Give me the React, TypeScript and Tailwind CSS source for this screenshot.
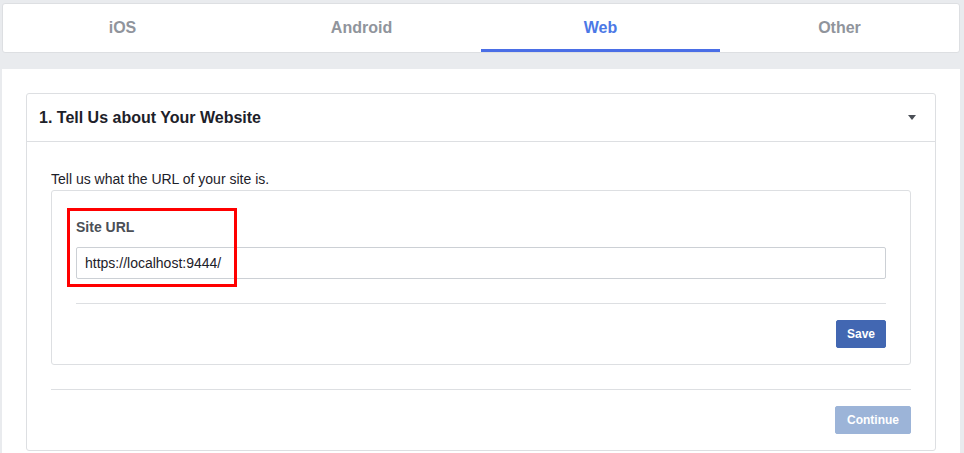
import { useState } from 'react';

const tabs = ['iOS', 'Android', 'Web', 'Other'];

export default function App() {
  const [active, setActive] = useState('Web');
  const [url, setUrl] = useState('https://localhost:9444/');

  return (
    <div className="min-h-screen bg-[#e9ebee] pt-[3px] pl-[2px] pr-[4px] font-['Liberation_Sans',Arial,sans-serif] text-[#1d2129]">
      {/* Platform tabs */}
      <div className="flex h-[50px] bg-white border border-[#dddfe2] rounded-[3px] overflow-hidden">
        {tabs.map((tab) => (
          <button
            key={tab}
            onClick={() => setActive(tab)}
            className={`flex-1 flex items-center justify-center pt-[2px] border-b-[3px] text-[16px] font-bold ${
              active === tab ? 'border-[#4a6ee6] text-[#4b78e6]' : 'border-transparent text-[#90949c]'
            }`}
          >
            {tab}
          </button>
        ))}
      </div>

      <div className="mt-[16px] bg-white px-[24px] pt-[24px] pb-[24px]">
        <div className="border border-[#dddfe2] rounded-[3px]">
          <div className="h-[48px] flex items-center justify-between pl-[12px] pr-[19px] border-b border-[#dddfe2]">
            <h2 className="text-[16px] font-bold text-[#1d2129]">1. Tell Us about Your Website</h2>
            <span className="w-0 h-0 border-l-[4px] border-r-[4px] border-t-[5px] border-l-transparent border-r-transparent border-t-[#4b4f56]" />
          </div>

          <div className="px-[24px] pt-[28px] pb-[16px]">
            <p className="text-[14px] leading-[18px]">Tell us what the URL of your site is.</p>

            <div className="relative mt-[2px] border border-[#dddfe2] rounded-[3px] px-[24px] pt-[27px] pb-[16px]">
              <label className="block text-[14px] leading-[18px] font-bold text-[#4b4f56]">Site URL</label>
              <input
                value={url}
                onChange={(e) => setUrl(e.target.value)}
                className="mt-[11px] block w-full h-[32px] border border-[#ccd0d5] rounded-[2px] px-[8px] text-[14px] text-[#1d2129] outline-none"
              />
              <div className="mt-[24px] border-t border-[#dddfe2]" />
              <div className="mt-[16px] flex justify-end">
                <button className="h-[28px] px-[10px] rounded-[2px] bg-[#4267b2] border border-[#4267b2] text-white text-[12px] font-bold">
                  Save
                </button>
              </div>
              {/* highlight box */}
              <div className="absolute left-[15px] top-[17px] w-[170px] h-[79px] border-[3px] border-[#ff0000] pointer-events-none" />
            </div>

            <div className="mt-[24px] border-t border-[#dddfe2]" />
            <div className="mt-[16px] flex justify-end">
              <button disabled className="h-[28px] px-[11px] rounded-[2px] bg-[#9cb4d8] border border-[#9cb4d8] text-white text-[12px] font-bold">
                Continue
              </button>
            </div>
          </div>
        </div>
      </div>
    </div>
  );
}
